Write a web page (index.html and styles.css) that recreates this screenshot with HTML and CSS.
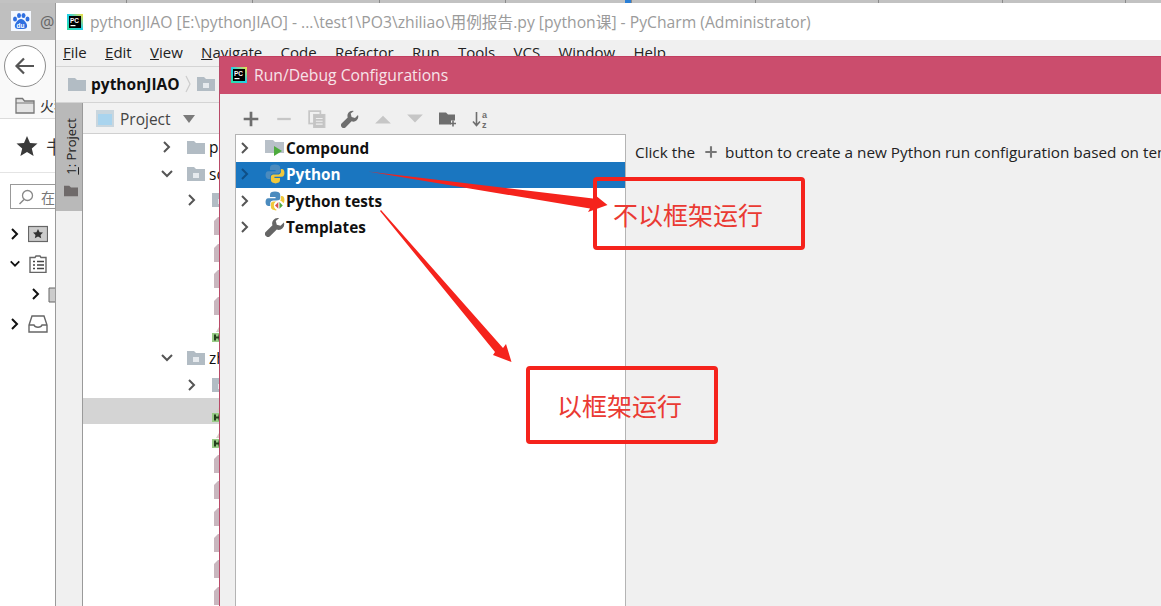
FILE: index.html
```html
<!DOCTYPE html>
<html lang="zh">
<head>
<meta charset="utf-8">
<title>Run/Debug Configurations</title>
<link rel="stylesheet" href="styles.css">
</head>
<body>
<svg class="defs" aria-hidden="true">
  <defs>
    <symbol id="folder" viewBox="0 0 18 16"><path d="M0 2h7l2 2h9v11H0z" fill="#b2bcc4"/></symbol>
    <symbol id="pkg" viewBox="0 0 18 16"><path d="M0 1h7l2 2h9v12H0z" fill="#b2bcc4"/><rect x="6" y="7" width="6" height="5" fill="#e6eaee"/></symbol>
    <symbol id="file" viewBox="0 0 14 18"><path d="M4 0h10v18H0V4z" fill="#c9b6be"/></symbol>
    <symbol id="html" viewBox="0 0 14 18"><path d="M7 0l3 5H4z" fill="#d8cfc6"/><rect y="6" width="14" height="9" fill="#98cc86"/><path d="M3 7.500v6M7.500 7.500v6M3 10.500h4.500" stroke="#23401b" stroke-width="2"/></symbol>
    <symbol id="chev-r" viewBox="0 0 12 14"><path d="M3 2l5 5-5 5" fill="none" stroke="currentColor" stroke-width="2"/></symbol>
    <symbol id="chev-d" viewBox="0 0 14 12"><path d="M2 3l5 5 5-5" fill="none" stroke="currentColor" stroke-width="2"/></symbol>
    <symbol id="plus" viewBox="0 0 16 16"><path d="M8 1.500v13M1.500 8h13" stroke="currentColor" stroke-width="2.400"/></symbol>
    <symbol id="wrench" viewBox="0 0 18 18"><path d="M11.500 0.800a5 5 0 0 0-4.800 6.600L0.800 13.300a2.700 2.700 0 0 0 3.900 3.900l5.900-5.900A5 5 0 0 0 17 5l-3 2.900-3.400-1-.9-3.300L12.800 1a5 5 0 0 0-1.300-.2z" fill="currentColor"/></symbol>
    <symbol id="py" viewBox="0 0 18 18">
      <path d="M9 0.500c-3 0-4.500 1-4.500 3V5.500H9.500V6.500H3C1 6.500 0.500 8.500 0.500 10s.5 3.500 2.500 3.500h1.700v-2.400c0-1.600 1.300-2.600 2.800-2.600h4c1.300 0 2.200-1 2.200-2.200V3.500c0-2-2-3-4.700-3z" fill="#4b8bbe"/>
      <path d="M9 17.500c3 0 4.500-1 4.500-3V12.500H8.500V11.500H15c2 0 2.500-2 2.500-3.500S17 4.500 15 4.500h-.7v2.400c0 1.600-1.300 2.600-2.800 2.600h-4c-1.300 0-2.200 1-2.200 2.200v2.800c0 2 2 3 4.700 3z" fill="#f0c83c"/>
    </symbol>
    <symbol id="pc" viewBox="0 0 16 16">
      <defs><linearGradient id="pcg" x1="0" y1="1" x2="1" y2="0"><stop offset="0" stop-color="#2fe0a0"/><stop offset=".5" stop-color="#21d0e8"/><stop offset="1" stop-color="#f8e040"/></linearGradient></defs>
      <rect width="16" height="16" fill="url(#pcg)"/><rect x="2" y="2" width="12" height="12" fill="#000"/>
      <text x="3" y="8.500" font-family="Liberation Sans, sans-serif" font-size="6.500" font-weight="700" fill="#fff">PC</text>
      <rect x="3.500" y="11" width="5" height="1.200" fill="#fff"/>
    </symbol>
  </defs>
</svg>

<div class="desktop">
  <section class="browser">
    <div class="tabstrip">
      <i class="tick wide"></i><i class="tick wide"></i><i class="tick wide"></i><i class="tick wide"></i><i class="tick blue"></i><i class="tick"></i><i class="tick"></i><i class="tick"></i><i class="tick"></i>
    </div>
    <div class="tabbar">
      <svg class="baidu" viewBox="0 0 20 20">
        <rect width="20" height="20" fill="#f4f8ff"/>
        <ellipse cx="4" cy="8" rx="2" ry="2.600" fill="#2f6fe0"/><ellipse cx="8" cy="4.500" rx="2" ry="2.600" fill="#2f6fe0"/><ellipse cx="12.500" cy="4.500" rx="2" ry="2.600" fill="#2f6fe0"/><ellipse cx="16.500" cy="8" rx="2" ry="2.600" fill="#2f6fe0"/>
        <path d="M10 8c3 0 7 5 6 8-.6 2-3 2-6 2s-5.500 0-6-2c-1-3 3-8 6-8z" fill="#2f6fe0"/>
        <text x="5.500" y="16.500" font-family="Liberation Sans, sans-serif" font-size="6.500" font-weight="700" fill="#fff">du</text>
      </svg>
      <span class="tabtext">@</span>
    </div>
    <div class="navrow">
      <span class="backbtn"><svg viewBox="0 0 24 24"><path d="M21 12H4M11 4.500L3.500 12l7.500 7.500" fill="none" stroke="#555" stroke-width="2.200"/></svg></span>
    </div>
    <div class="bookmarks">
      <svg class="bm-folder" viewBox="0 0 20 17"><path d="M1 1.500h6.500l2 2.500H19v12H1z" fill="#e4e4e4" stroke="#777" stroke-width="1.300"/><path d="M1 6h18" stroke="#777" stroke-width="1"/></svg>
      <span>火狐官方站点</span>
    </div>
    <div class="side-head">
      <svg class="star" viewBox="0 0 22 22"><path d="M11 1l3 7 7.500.6-5.700 4.900 1.800 7.400L11 17l-6.600 3.900 1.800-7.400L.5 8.600 8 8z" fill="#3a3a3a"/></svg>
      <span>书签</span>
    </div>
    <div class="searchwrap">
      <div class="search">
        <svg viewBox="0 0 16 16"><circle cx="9.500" cy="6.500" r="5" fill="none" stroke="#888" stroke-width="1.300"/><path d="M6 10.500L1.500 15" stroke="#888" stroke-width="1.500"/></svg>
        <span>在书签中搜索</span>
      </div>
    </div>
    <ul class="bm-tree">
      <li class="bm-row"><svg class="bm-chev" viewBox="0 0 12 14"><use href="#chev-r"/></svg>
        <svg class="bm-ico" viewBox="0 0 20 16"><rect x=".5" y=".5" width="19" height="15" fill="#ccc" stroke="#666" stroke-width="1.200"/><path d="M10 3l1.600 3.200 3.400.4-2.500 2.300.7 3.400L10 10.600l-3.200 1.700.7-3.400L5 6.600l3.400-.4z" fill="#333"/></svg><span>书签工具栏</span></li>
      <li class="bm-row"><svg class="bm-chev" viewBox="0 0 14 12"><use href="#chev-d"/></svg>
        <svg class="bm-ico" viewBox="0 0 18 18"><path d="M1 2.500h5l1-1.500h4l1 1.500h5v15H1z" fill="#fff" stroke="#666" stroke-width="1.400"/><path d="M4 6.500h2M8 6.500h7M4 10h2M8 10h7M4 13.500h2M8 13.500h7" stroke="#444" stroke-width="1.300"/></svg><span>书签菜单</span></li>
      <li class="bm-row sub"><svg class="bm-chev" viewBox="0 0 12 14"><use href="#chev-r"/></svg>
        <svg class="bm-ico small" viewBox="0 0 18 18"><path d="M1 3h16v14H1z" fill="#ccc" stroke="#666"/></svg><span>移动</span></li>
      <li class="bm-row"><svg class="bm-chev" viewBox="0 0 12 14"><use href="#chev-r"/></svg>
        <svg class="bm-ico" viewBox="0 0 20 18"><path d="M4 1h12l3 9v7H1v-7zM1 10h5c1 3 7 3 8 0h5" fill="#fff" stroke="#666" stroke-width="1.400"/></svg><span>其他书签</span></li>
    </ul>
  </section>

  <section class="ide">
    <header class="ide-title">
      <svg class="pc-ico"><use href="#pc"/></svg>
      <span>pythonJIAO [E:\pythonJIAO] - ...\test1\PO3\zhiliao\用例报告.py [python课] - PyCharm (Administrator)</span>
    </header>
    <nav class="menu">
      <span><u>F</u>ile</span><span><u>E</u>dit</span><span><u>V</u>iew</span><span><u>N</u>avigate</span><span><u>C</u>ode</span><span><u>R</u>efactor</span><span>R<u>u</u>n</span><span><u>T</u>ools</span><span>VC<u>S</u></span><span><u>W</u>indow</span><span><u>H</u>elp</span>
    </nav>
    <div class="crumbs">
      <svg class="crumb-folder"><use href="#folder"/></svg>
      <b>pythonJIAO</b>
      <svg class="crumb-sep" viewBox="0 0 6 18"><path d="M1 1l4 8-4 8" fill="none" stroke="#ccc" stroke-width="1.200"/></svg>
      <svg class="crumb-folder"><use href="#pkg"/></svg>
    </div>
    <div class="ide-main">
      <aside class="toolstrip">
        <div class="toolbtn">
          <span class="toolbtn-label"><u>1</u>: Project</span>
          <svg class="toolbtn-ico" viewBox="0 0 18 16"><path d="M1 2h6l2 2h8v10H1z" fill="#6f6a6a"/></svg>
        </div>
      </aside>
      <div class="project">
        <div class="proj-head">
          <svg class="proj-ico" viewBox="0 0 18 17"><rect width="18" height="17" fill="#c9d6de"/><rect x="2" y="4" width="14" height="11" fill="#a9d4ee"/></svg>
          <span>Project</span>
          <svg class="proj-caret" viewBox="0 0 12 8"><path d="M0 0h12L6 8z" fill="#7b7b7b"/></svg>
        </div>
        <div class="tree">
          <div class="row d1"><svg class="tw r"><use href="#chev-r"/></svg><svg class="fd"><use href="#folder"/></svg><span>pages</span></div>
          <div class="row d1"><svg class="tw d"><use href="#chev-d"/></svg><svg class="fd"><use href="#pkg"/></svg><span>scripts</span></div>
          <div class="row d2"><svg class="tw r"><use href="#chev-r"/></svg><svg class="fd"><use href="#pkg"/></svg></div>
          <div class="row d3"><svg class="fl"><use href="#file"/></svg></div>
          <div class="row d3"><svg class="fl"><use href="#file"/></svg></div>
          <div class="row d3"><svg class="fl"><use href="#file"/></svg></div>
          <div class="row d3"><svg class="fl"><use href="#file"/></svg></div>
          <div class="row d3"><svg class="fl h"><use href="#html"/></svg></div>
          <div class="row d1"><svg class="tw d"><use href="#chev-d"/></svg><svg class="fd"><use href="#pkg"/></svg><span>zhiliao</span></div>
          <div class="row d2"><svg class="tw r"><use href="#chev-r"/></svg><svg class="fd"><use href="#pkg"/></svg></div>
          <div class="row d3 selected"><svg class="fl h"><use href="#html"/></svg></div>
          <div class="row d3"><svg class="fl h"><use href="#html"/></svg></div>
          <div class="row d3"><svg class="fl"><use href="#file"/></svg></div>
          <div class="row d3"><svg class="fl"><use href="#file"/></svg></div>
          <div class="row d3"><svg class="fl"><use href="#file"/></svg></div>
          <div class="row d3"><svg class="fl"><use href="#file"/></svg></div>
          <div class="row d3"><svg class="fl"><use href="#file"/></svg></div>
          <div class="row d3"><svg class="fl"><use href="#file"/></svg></div>
        </div>
      </div>
    </div>
  </section>

  <section class="dialog">
    <header class="dlg-title">
      <svg class="pc-ico"><use href="#pc"/></svg>
      <span>Run/Debug Configurations</span>
    </header>
    <div class="dlg-tools">
      <span class="tool dark"><svg><use href="#plus"/></svg></span>
      <span class="tool dim"><svg viewBox="0 0 16 16"><path d="M2 8h12" stroke="currentColor" stroke-width="2"/></svg></span>
      <span class="tool dim"><svg viewBox="0 0 16 16"><rect x="1" y="1" width="10" height="11" fill="none" stroke="currentColor" stroke-width="1.500"/><rect x="5" y="4" width="10" height="12" fill="#c4c4c4" stroke="currentColor"/><path d="M7 7.500h6M7 10h6M7 12.500h6" stroke="#eee"/></svg></span>
      <span class="tool dark"><svg><use href="#wrench"/></svg></span>
      <span class="tool dim"><svg viewBox="0 0 16 16"><path d="M1 12L8 5l7 7z" fill="currentColor"/></svg></span>
      <span class="tool dim"><svg viewBox="0 0 16 16"><path d="M1 4l7 7 7-7z" fill="currentColor"/></svg></span>
      <span class="tool dark"><svg viewBox="0 0 18 16"><path d="M0 1.500h7l2 2h7v6h-4v4H0z" fill="currentColor"/><path d="M14 9.500v6M11 12.500h6" stroke="currentColor" stroke-width="1.600"/></svg></span>
      <span class="tool dark"><svg viewBox="0 0 18 18"><path d="M4.500 2v13M1 11.500l3.500 4 3.500-4" fill="none" stroke="currentColor" stroke-width="1.600"/><text x="10" y="7.500" font-family="Liberation Sans, sans-serif" font-size="9" font-weight="700" fill="currentColor">a</text><text x="10" y="17.500" font-family="Liberation Sans, sans-serif" font-size="9" font-weight="700" fill="currentColor">z</text></svg></span>
    </div>
    <div class="dlg-body">
      <div class="cfg-list">
        <div class="cfg"><svg class="cfg-tw"><use href="#chev-r"/></svg>
          <svg class="cfg-ico" viewBox="0 0 20 20"><path d="M0 2h8l2 2h9v11H0z" fill="#b8c0c8"/><path d="M9 8l8 5-8 5z" fill="#4eab3e"/></svg><span>Compound</span></div>
        <div class="cfg active"><svg class="cfg-tw"><use href="#chev-r"/></svg>
          <svg class="cfg-ico"><use href="#py"/></svg><span>Python</span></div>
        <div class="cfg"><svg class="cfg-tw"><use href="#chev-r"/></svg>
          <svg class="cfg-ico" viewBox="0 0 18 18"><use href="#py" width="18" height="18"/><circle cx="12.500" cy="13" r="4.500" fill="#fff"/><path d="M12 10l-3 3 3 3z" fill="#d9534f"/><path d="M13 10l3 3-3 3z" fill="#4eab3e"/></svg><span>Python tests</span></div>
        <div class="cfg"><svg class="cfg-tw"><use href="#chev-r"/></svg>
          <svg class="cfg-ico wr"><use href="#wrench"/></svg><span>Templates</span></div>
      </div>
      <p class="hint"><span>Click the </span><svg class="hint-plus"><use href="#plus"/></svg><span> button to create a new Python run configuration based on templates</span></p>
    </div>
  </section>

  <svg class="arrows" viewBox="0 0 1161 606">
    <polygon points="368,171.500 593,198.500 595,195 607.500,205 588,212 590,208.500" fill="#f5231c"/>
    <polygon points="380,211 381,210 503,348 506,344 511.500,362 493,355 495,352" fill="#f5231c"/>
  </svg>
  <div class="note note-a">不以框架运行</div>
  <div class="note note-b">以框架运行</div>
</div>
</body>
</html>
```
FILE: styles.css
```css
* { box-sizing: border-box; }
html, body { margin: 0; padding: 0; }
body {
  width: 1161px;
  height: 606px;
  overflow: hidden;
  background: #fff;
  font-family: "Open Sans", "Noto Sans", "Noto Sans CJK SC", sans-serif;
  color: #111;
}
svg { display: block; flex: none; }
.defs { position: absolute; width: 0; height: 0; }
.desktop { position: relative; width: 1161px; height: 606px; overflow: hidden; }

/* Browser behind the IDE */
.browser { display: flex; flex-direction: column; width: 1161px; height: 606px; background: #fff; }
.tabstrip { display: flex; flex: none; height: 3px; background: #c2c2c2; }
.tick { flex: none; width: 123.500px; border-right: 1px solid #8a8a8a; }
.tick.wide { width: 126.500px; }
.tick.blue { width: 126px; background: linear-gradient(90deg, #c2c2c2 95%, #2a7fd6 95%); }
.tabbar { display: flex; flex: none; align-items: center; height: 37px; background: #bfbfbf; padding-left: 11px; gap: 9px; }
.baidu { width: 20px; height: 20px; margin-top: -1px; }
.tabtext { font-size: 16px; color: #666; }
.navrow { display: flex; flex: none; align-items: center; height: 52px; background: #f9f9f9; padding-left: 4px; }
.backbtn { display: flex; align-items: center; justify-content: center; width: 42px; height: 42px; border: 1px solid #8d8d8d; border-radius: 50%; background: #fff; }
.backbtn svg { width: 24px; height: 24px; }
.bookmarks { display: flex; flex: none; align-items: center; gap: 5px; height: 27px; padding-left: 15px; background: #f9f9f9; border-bottom: 1px solid #dcdcdc; font-size: 14px; color: #333; }
.bm-folder { width: 20px; height: 17px; }
.side-head { display: flex; flex: none; align-items: center; gap: 8px; height: 54px; padding-left: 16px; border-bottom: 1px solid #e4e4e4; font-size: 18px; color: #333; }
.star { width: 22px; height: 22px; }
.searchwrap { flex: none; padding: 11px 0 0 10px; }
.search { display: flex; align-items: center; gap: 7px; width: 200px; height: 25px; padding-left: 7px; border: 1px solid #999; font-size: 14px; color: #777; }
.search svg { width: 16px; height: 16px; }
.bm-tree { list-style: none; margin: 10px 0 0; padding: 0; }
.bm-row { display: flex; align-items: center; height: 30px; padding-left: 9px; gap: 7px; font-size: 14px; color: #333; }
.bm-row.sub { padding-left: 30px; gap: 6px; }
.bm-chev { width: 12px; height: 14px; color: #111; }
.bm-ico { width: 20px; height: 18px; }
.bm-ico.small { width: 18px; }

/* IDE window */
.ide { position: absolute; left: 55px; top: 3px; width: 1106px; height: 603px; display: flex; flex-direction: column; background: #f0f0f0; border-left: 1px solid #9a9a9a; }
.ide-title { display: flex; flex: none; align-items: center; gap: 7px; height: 37px; padding-left: 11px; background: #fff; font-size: 15.700px; color: #9b9b9b; white-space: nowrap; }
.pc-ico { width: 16px; height: 16px; }
.menu { display: flex; flex: none; gap: 18.300px; height: 26px; padding: 2px 0 0 7px; font-size: 15px; color: #222; white-space: nowrap; }
.crumbs { display: flex; flex: none; align-items: center; height: 37px; padding: 0 0 2px 12px; border-top: 1px solid #d4d4d4; border-bottom: 1px solid #d4d4d4; font-size: 15.500px; color: #111; }
.crumb-folder { width: 18px; height: 16px; }
.crumbs b { margin: 0 5px 0 5px; }
.crumb-sep { width: 6px; height: 18px; margin-right: 6px; }
.ide-main { display: flex; flex: 1; min-height: 0; overflow: hidden; }
.toolstrip { flex: none; width: 27px; border-right: 1px solid #9a9a9a; background: #f0f0f0; }
.toolbtn { display: flex; flex-direction: column; align-items: center; height: 108px; padding: 15px 0 0 3px; gap: 9px; background: #b9b9b9; }
.toolbtn-label { writing-mode: vertical-rl; transform: rotate(180deg); font-size: 13px; color: #222; white-space: nowrap; }
.toolbtn-ico { width: 16px; height: 14px; }
.project { flex: 1; display: flex; flex-direction: column; min-width: 0; background: #fff; }
.proj-head { display: flex; flex: none; align-items: center; height: 31px; padding: 1px 0 0 13px; background: #f2f2f2; border-bottom: 1px solid #d0d0d0; font-size: 15.500px; color: #444; }
.proj-ico { width: 18px; height: 17px; margin-right: 6px; }
.proj-caret { width: 12px; height: 8px; margin-left: 12px; }
.tree { display: flex; flex: none; flex-direction: column; }
.row { display: flex; flex: none; align-items: center; height: 26.400px; font-size: 15.500px; white-space: nowrap; }
.row.d1 { padding-left: 78px; }
.row.d2 { padding-left: 103px; }
.row.d3 { padding-left: 131px; }
.row.selected { background: #d4d4d4; }
.tw { color: #555; margin-right: 14px; }
.tw.r { width: 12px; height: 14px; }
.tw.d { width: 14px; height: 12px; margin-left: -1px; margin-right: 13px; }
.fd { width: 18px; height: 16px; margin-right: 4px; }
.fl { width: 14px; height: 18px; }
.fl.h { margin: 9px 0 0 -2px; }

/* Dialog */
.dialog { position: absolute; left: 219px; top: 56px; width: 942px; height: 550px; display: flex; flex-direction: column; overflow: hidden; background: #f0f0f0; border-left: 1px solid #b94a68; }
.dlg-title { display: flex; flex: none; align-items: center; gap: 7px; height: 38px; padding: 0 0 2px 11px; background: #cb4d6d; border-top: 1px solid #c23e60; font-size: 15.700px; color: #f7e4e9; }
.dlg-tools { display: flex; flex: none; align-items: center; height: 40px; padding: 10px 0 0 15px; }
.tool { display: flex; justify-content: center; width: 32.800px; }
.tool svg { width: 18px; height: 18px; }
.tool.dark { color: #6e6e6e; }
.tool.dim { color: #c6c6c6; }
.dlg-body { display: flex; flex: 1; min-height: 0; padding-left: 15px; }
.cfg-list { flex: none; width: 391px; background: #fff; border: 1px solid #b4b4b4; border-bottom: 0; }
.cfg { display: flex; align-items: center; height: 26.500px; padding: 0 0 1px 3px; font-size: 15.300px; font-weight: 700; color: #111; }
.cfg.active { background: #1a76c0; color: #fff; }
.cfg-tw { width: 12px; height: 14px; margin-right: 14px; color: #555; }
.cfg.active .cfg-tw { color: #0f4f86; }
.cfg-ico { width: 20px; height: 20px; margin-right: 1px; }
.cfg-ico.wr { color: #666; }
.hint { display: flex; flex: none; align-items: center; margin: 5px 0 0 9px; height: 26px; font-size: 15.300px; color: #222; white-space: pre; }
.hint-plus { width: 14px; height: 14px; color: #777; margin: 0 3px 0 5px; }

/* Annotations */
.arrows { position: absolute; left: 0; top: 0; width: 1161px; height: 606px; pointer-events: none; }
.note { position: absolute; display: flex; align-items: center; border: 4px solid #f5231c; border-radius: 4px; font-family: "Noto Sans CJK SC", sans-serif; font-size: 25px; color: #ea3a33; white-space: nowrap; }
.note-a { left: 593px; top: 177px; width: 212px; height: 73px; padding: 0 0 0 16px; }
.note-b { left: 526px; top: 366px; width: 192px; height: 78px; padding: 0 0 0 27px; }
```
